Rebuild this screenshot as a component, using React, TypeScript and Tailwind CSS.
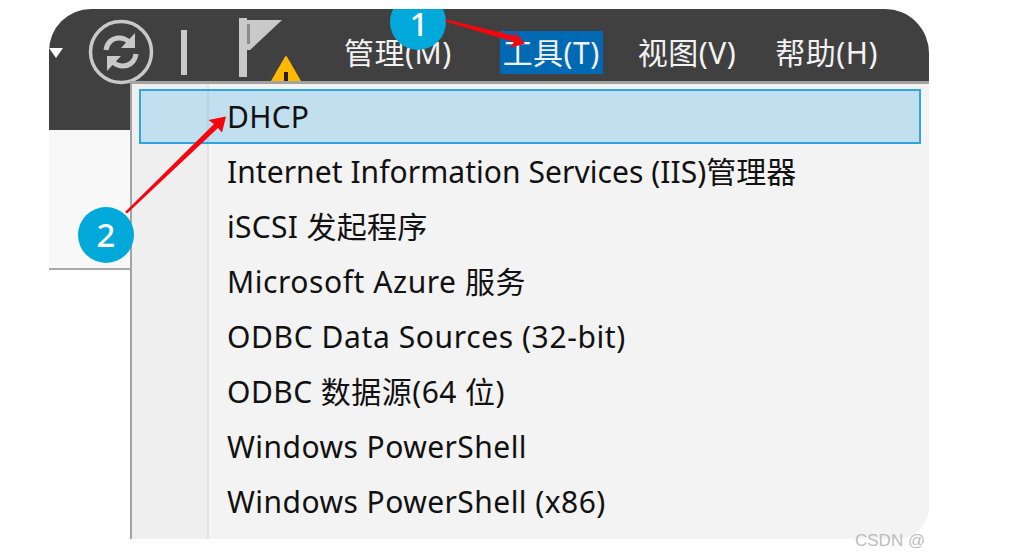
import React from 'react'

const font = { sans: "font-['Noto_Sans','Noto_Sans_CJK_SC',sans-serif]" }

const items = [
  { label: 'DHCP', tracking: 'tracking-[0.25px]' },
  { label: 'Internet Information Services (IIS)管理器', tracking: 'tracking-[0.05px]' },
  { label: 'iSCSI 发起程序', tracking: 'tracking-[0.3px]' },
  { label: 'Microsoft Azure 服务', tracking: 'tracking-[0.55px]' },
  { label: 'ODBC Data Sources (32-bit)', tracking: 'tracking-[0.6px]' },
  { label: 'ODBC 数据源(64 位)', tracking: 'tracking-[0.45px]' },
  { label: 'Windows PowerShell', tracking: 'tracking-[0.45px]' },
  { label: 'Windows PowerShell (x86)', tracking: 'tracking-[0.45px]' },
]

const RefreshIcon = () => (
  <svg width="68" height="68" viewBox="0 0 68 68" fill="none" className="shrink-0">
    <circle cx="34" cy="34" r="30.5" stroke="#c9c9c9" strokeWidth="3.5" />
    <path d="M19 32c1-8 7-12 13-12 4 0 7 1 10 4" stroke="#c9c9c9" strokeWidth="5" />
    <path d="M49 36c-1 8-7 12-13 12-4 0-7-1-10-4" stroke="#c9c9c9" strokeWidth="5" />
    <path d="M48 15v15H34z" fill="#c9c9c9" />
    <path d="M20 53V38h14z" fill="#c9c9c9" />
  </svg>
)

const FlagIcon = () => (
  <svg width="66" height="72" viewBox="0 0 66 72" className="shrink-0 overflow-visible">
    <rect x="0" y="0" width="8" height="59" fill="#c9c9c9" />
    <path d="M8 2h35L11 32H8z" fill="#c9c9c9" />
    <rect x="8" y="6" width="3" height="20" fill="#8b8b8b" />
    <path d="M47 39 L32 65 H62 Z" fill="#ffb900" stroke="#ffb900" strokeWidth="2" strokeLinejoin="round" />
    <rect x="45" y="54" width="4" height="12" fill="#222" />
  </svg>
)

const Arrows = () => (
  <svg viewBox="49 9 880 530" className="absolute inset-0 h-full w-full pointer-events-none">
    <path d="M446 19.5 L516 36 L513 30 L525 43.5 L510 48 L514 42 L445 21.5 Z" fill="#f5060f" />
    <path d="M125 212 L214 124 L208.5 120 L226 116.5 L222 132.5 L218 128 L127 213.5 Z" fill="#f5060f" />
  </svg>
)

const App = () => {
  return (
    <div className={`relative h-[559px] w-[1029px] overflow-hidden bg-white pl-[49px] pt-[9px] ${font.sans}`}>
      <div className="relative h-[530px] w-[880px] overflow-hidden rounded-tl-[42px] rounded-tr-[44px] rounded-br-[32px] bg-white">
        <header className="flex h-[121px] items-start bg-[#404040]">
          <div className="mt-[39px] h-0 w-0 shrink-0 border-x-[7px] border-t-[10px] border-x-transparent border-t-white" />
          <div className="ml-[24px] mt-[9px] flex items-start">
            <RefreshIcon />
            <div className="ml-[26px] mt-[12px] h-[45px] w-[6px] bg-[#c9c9c9]" />
            <div className="ml-[52px]">
              <FlagIcon />
            </div>
          </div>
          <nav className="ml-[39px] mt-[22px] flex items-center text-[30px] leading-[43px] tracking-[0.5px] text-[#f2f2f2]">
            <span className="mr-[48px] whitespace-nowrap">管理(M)</span>
            <span className="mr-[35px] w-[103px] bg-[#0069b4] text-center whitespace-nowrap">工具(T)</span>
            <span className="mr-[39px] whitespace-nowrap">视图(V)</span>
            <span className="whitespace-nowrap">帮助(H)</span>
          </nav>
        </header>

        <div className="h-[140px] w-[81px] border-b-[2px] border-[#a8a8a8] bg-[#f8f8f8]" />

        <div className="absolute bottom-0 left-[81px] right-0 top-[72px] flex border-l-[2px] border-t-[3px] border-[#a3a3a3] bg-[#f3f3f3]">
          <div className="w-[77px] shrink-0 border-r-[2px] border-[#e3e3e3] bg-[#efefef]" />
          <ul className="relative -ml-[70px] flex-1 pr-[8px] pt-[5px] text-[30px] leading-[55px] text-[#111]">
            {items.map((item, i) => (
              <li
                key={item.label}
                className={
                  i === 0
                    ? `relative h-[55px] border-2 border-[#2ea6e2] bg-[#c1dfee] pl-[86px] leading-[51px] whitespace-nowrap ${item.tracking}`
                    : `h-[55px] pl-[88px] whitespace-nowrap ${item.tracking}`
                }
              >
                {i === 0 && <span className="absolute bottom-0 left-[66px] top-0 w-[2px] bg-[#b5d5e5]" />}
                {item.label}
              </li>
            ))}
          </ul>
        </div>

        <div className="absolute left-[341px] top-[-15px] flex h-[56px] w-[56px] items-center justify-center rounded-full bg-[#00a9d9] pl-[2px] pt-[4px] text-[33px] font-medium leading-[24px] text-white">
          1
        </div>
        <div className="absolute left-[29px] top-[198px] flex h-[56px] w-[56px] items-center justify-center rounded-full bg-[#00a9d9] text-[33px] font-medium leading-[24px] text-white">
          2
        </div>
        <Arrows />
      </div>
      <span className="absolute left-[855px] top-[531px] font-['Liberation_Sans',sans-serif] text-[17px] leading-[20px] text-[#bdbdbd]">
        CSDN @
      </span>
    </div>
  )
}

export default App
